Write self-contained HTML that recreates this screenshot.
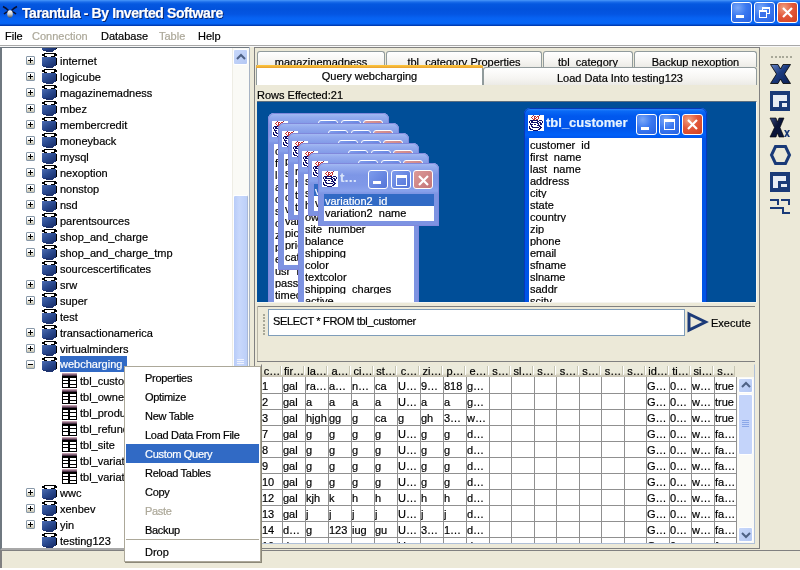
<!DOCTYPE html><html><head><meta charset="utf-8"><style>
*{margin:0;padding:0;box-sizing:border-box}
html,body{width:800px;height:570px;overflow:hidden;background:#ECE9D8;font-family:"Liberation Sans", sans-serif;font-size:11px;color:#000}
.a{position:absolute}
.t{position:absolute;white-space:pre;line-height:16px;-webkit-text-stroke:0.2px currentColor}
#root{position:absolute;left:0;top:0;width:800px;height:570px;overflow:hidden;will-change:transform}
svg{position:absolute;overflow:visible}
</style></head><body><div id="root"><svg width="0" height="0" style="position:absolute"><defs>
<linearGradient id="dbg" x1="0" y1="0" x2="1" y2="1"><stop offset="0" stop-color="#4C6CB0"/><stop offset="0.5" stop-color="#2A4A90"/><stop offset="1" stop-color="#182E6A"/></linearGradient>
<symbol id="db" viewBox="0 0 15 16">
<rect x="2" y="0" width="12" height="1" fill="#000"/>
<rect x="0" y="1" width="3" height="2" fill="#000"/>
<rect x="12" y="1" width="3" height="2" fill="#000"/>
<rect x="3" y="1" width="9" height="2" fill="#fff"/>
<rect x="2" y="3" width="3" height="1" fill="#000"/>
<rect x="9" y="3" width="4" height="1" fill="#000"/>
<rect x="5" y="3" width="4" height="1" fill="#fff"/>
<rect x="0" y="4" width="14" height="9" fill="url(#dbg)"/>
<rect x="14" y="5" width="1" height="7" fill="#000"/>
<rect x="1" y="13" width="2" height="1" fill="#1E3470"/>
<rect x="4" y="13" width="7" height="2" fill="#1E3470"/>
<rect x="2" y="13" width="10" height="1" fill="#1E3470"/>
</symbol>
<linearGradient id="tbh" x1="0" y1="0" x2="0" y2="1"><stop offset="0" stop-color="#E0B8C8"/><stop offset="1" stop-color="#301830"/></linearGradient>
<symbol id="tb" viewBox="0 0 15 15">
<rect x="0" y="0" width="15" height="15" fill="#000"/>
<rect x="0" y="0" width="15" height="3" fill="url(#tbh)"/>
<rect x="1" y="5" width="5" height="2" fill="#fff"/>
<rect x="1" y="8" width="5" height="2" fill="#fff"/>
<rect x="1" y="11" width="5" height="3" fill="#fff"/>
<rect x="8" y="5" width="6" height="2" fill="#fff"/>
<rect x="8" y="8" width="6" height="3" fill="#fff"/>
<rect x="8" y="12" width="6" height="2" fill="#fff"/>
</symbol>
<symbol id="cup" viewBox="0 0 16 16"><rect x="0" y="0" width="16" height="16" fill="#fff"/><path d="M4 1h1v1h-1zM6 1h2v1h-2zM9 1h2v1h-2zM3 2h1v1h-1zM6 2h1v1h-1zM8 2h1v1h-1zM10 2h1v1h-1zM4 3h1v1h-1zM6 3h2v1h-2zM10 3h1v1h-1zM5 4h2v1h-2zM8 4h2v1h-2z" fill="#C83030"/><path d="M5 0h1v1h-1zM11 0h1v1h-1z" fill="#703060"/><path d="M2 5h8v1h-8zM11 5h3v1h-3zM1 6h1v1h-1zM3 6h2v1h-2zM9 6h2v1h-2zM14 6h1v1h-1zM1 7h1v1h-1zM3 7h7v1h-7zM11 7h2v1h-2zM14 7h1v1h-1zM2 8h1v1h-1zM9 8h2v1h-2zM12 8h2v1h-2zM2 9h3v1h-3zM6 9h2v1h-2zM10 9h1v1h-1zM12 9h2v1h-2zM3 10h1v1h-1zM9 10h3v1h-3zM1 11h1v1h-1zM3 11h2v1h-2zM11 11h2v1h-2zM1 12h1v1h-1zM4 12h7v1h-7zM12 12h2v1h-2zM1 13h2v1h-2zM11 13h2v1h-2zM2 14h3v1h-3zM10 14h2v1h-2zM5 15h5v1h-5z" fill="#10106A"/></symbol>
<linearGradient id="xbg" x1="0" y1="0" x2="1" y2="1"><stop offset="0" stop-color="#6A88C8"/><stop offset="0.45" stop-color="#1C3C80"/><stop offset="1" stop-color="#0A1E50"/></linearGradient>
<linearGradient id="xbg2" x1="0" y1="0" x2="1" y2="1"><stop offset="0" stop-color="#3A4C80"/><stop offset="0.45" stop-color="#0A1438"/><stop offset="1" stop-color="#0A1840"/></linearGradient>
</defs></svg><div class="a" style="left:0;top:0;width:800px;height:26px;background:linear-gradient(to bottom,#4A98FA 0px,#3282F2 1px,#1A6CEA 2px,#0558E0 4px,#0252DC 9px,#0455E2 14px,#0762F2 18px,#0766F6 22px,#0562F2 24px,#0040B8 25px,#0038B0 26px)"></div><svg class="a" style="left:0;top:0" width="20" height="20" viewBox="0 0 20 20">
<defs><linearGradient id="spb" x1="0" y1="0" x2="0" y2="1"><stop offset="0" stop-color="#FFFFFF"/><stop offset="0.5" stop-color="#D0D0D0"/><stop offset="1" stop-color="#505050"/></linearGradient></defs>
<path d="M3 6.5 Q6 8 8.5 10.5 M17 6.5 Q14 8 11.5 10.5 M4 14 Q6 12 8.5 11.5 M16 14 Q14 12 11.5 11.5" stroke="#0A1030" stroke-width="1.5" fill="none"/>
<ellipse cx="10" cy="14" rx="2.8" ry="3.8" fill="url(#spb)"/>
</svg><div class="t" style="left:22px;top:5px;font-weight:bold;font-size:14px;color:#fff;text-shadow:1px 1px 0 #0A246A;letter-spacing:-0.4px">Tarantula - By Inverted Software</div><div class="a" style="left:731px;top:2px;width:21px;height:21px;border:1px solid #fff;border-radius:3px;background:radial-gradient(circle at 30% 25%,#7AA8F8 0%,#3A78F0 45%,#2660E0 100%)"><div class="a" style="left:4px;top:12px;width:8px;height:3px;background:#fff"></div></div><div class="a" style="left:754px;top:2px;width:21px;height:21px;border:1px solid #fff;border-radius:3px;background:radial-gradient(circle at 30% 25%,#7AA8F8 0%,#3A78F0 45%,#2660E0 100%)"><div class="a" style="left:7px;top:4px;width:8px;height:7px;border:1px solid #fff;border-top-width:2px"></div><div class="a" style="left:4px;top:7px;width:8px;height:8px;border:1px solid #fff;border-top-width:2px;background:#3A72EA"></div></div><div class="a" style="left:777px;top:2px;width:21px;height:21px;border:1px solid #fff;border-radius:3px;background:radial-gradient(circle at 30% 25%,#F0A080 0%,#E2583A 45%,#D04020 100%)"><svg style="left:0;top:0" width="19" height="19"><path d="M5 5 L14 14 M14 5 L5 14" stroke="#fff" stroke-width="2.2"/></svg></div><div class="a" style="left:0;top:26px;width:800px;height:19px;background:#FFFFFF"></div><div class="a" style="left:0;top:45px;width:800px;height:1px;background:#A8A8A8"></div><div class="a" style="left:0;top:46px;width:800px;height:1px;background:#F8F8F8"></div><div class="t" style="left:5px;top:28px;color:#000">File</div><div class="t" style="left:32px;top:28px;color:#ACA899">Connection</div><div class="t" style="left:101px;top:28px;color:#000">Database</div><div class="t" style="left:159px;top:28px;color:#ACA899">Table</div><div class="t" style="left:198px;top:28px;color:#000">Help</div><div class="a" style="left:0;top:47px;width:250px;height:503px;background:#fff;border-left:2px solid #6F7880;border-top:1px solid #6F7880;border-bottom:2px solid #A8A8A8"></div><div class="a" style="left:2px;top:48px;width:230px;height:500px;overflow:hidden"><svg style="left:40px;top:-11px" width="15" height="16"><use href="#db"/></svg><div class="a" style="left:24px;top:8px;width:9px;height:9px;border:1px solid #8898A8;border-radius:1px;background:linear-gradient(to bottom,#fff 30%,#C8C5B0)"></div><div class="a" style="left:26px;top:12px;width:5px;height:1px;background:#000"></div><div class="a" style="left:28px;top:10px;width:1px;height:5px;background:#000"></div><svg style="left:40px;top:5px" width="15" height="16"><use href="#db"/></svg><div class="t" style="left:58px;top:5px">internet</div><div class="a" style="left:24px;top:24px;width:9px;height:9px;border:1px solid #8898A8;border-radius:1px;background:linear-gradient(to bottom,#fff 30%,#C8C5B0)"></div><div class="a" style="left:26px;top:28px;width:5px;height:1px;background:#000"></div><div class="a" style="left:28px;top:26px;width:1px;height:5px;background:#000"></div><svg style="left:40px;top:21px" width="15" height="16"><use href="#db"/></svg><div class="t" style="left:58px;top:21px">logicube</div><div class="a" style="left:24px;top:40px;width:9px;height:9px;border:1px solid #8898A8;border-radius:1px;background:linear-gradient(to bottom,#fff 30%,#C8C5B0)"></div><div class="a" style="left:26px;top:44px;width:5px;height:1px;background:#000"></div><div class="a" style="left:28px;top:42px;width:1px;height:5px;background:#000"></div><svg style="left:40px;top:37px" width="15" height="16"><use href="#db"/></svg><div class="t" style="left:58px;top:37px">magazinemadness</div><div class="a" style="left:24px;top:56px;width:9px;height:9px;border:1px solid #8898A8;border-radius:1px;background:linear-gradient(to bottom,#fff 30%,#C8C5B0)"></div><div class="a" style="left:26px;top:60px;width:5px;height:1px;background:#000"></div><div class="a" style="left:28px;top:58px;width:1px;height:5px;background:#000"></div><svg style="left:40px;top:53px" width="15" height="16"><use href="#db"/></svg><div class="t" style="left:58px;top:53px">mbez</div><div class="a" style="left:24px;top:72px;width:9px;height:9px;border:1px solid #8898A8;border-radius:1px;background:linear-gradient(to bottom,#fff 30%,#C8C5B0)"></div><div class="a" style="left:26px;top:76px;width:5px;height:1px;background:#000"></div><div class="a" style="left:28px;top:74px;width:1px;height:5px;background:#000"></div><svg style="left:40px;top:69px" width="15" height="16"><use href="#db"/></svg><div class="t" style="left:58px;top:69px">membercredit</div><div class="a" style="left:24px;top:88px;width:9px;height:9px;border:1px solid #8898A8;border-radius:1px;background:linear-gradient(to bottom,#fff 30%,#C8C5B0)"></div><div class="a" style="left:26px;top:92px;width:5px;height:1px;background:#000"></div><div class="a" style="left:28px;top:90px;width:1px;height:5px;background:#000"></div><svg style="left:40px;top:85px" width="15" height="16"><use href="#db"/></svg><div class="t" style="left:58px;top:85px">moneyback</div><div class="a" style="left:24px;top:104px;width:9px;height:9px;border:1px solid #8898A8;border-radius:1px;background:linear-gradient(to bottom,#fff 30%,#C8C5B0)"></div><div class="a" style="left:26px;top:108px;width:5px;height:1px;background:#000"></div><div class="a" style="left:28px;top:106px;width:1px;height:5px;background:#000"></div><svg style="left:40px;top:101px" width="15" height="16"><use href="#db"/></svg><div class="t" style="left:58px;top:101px">mysql</div><div class="a" style="left:24px;top:120px;width:9px;height:9px;border:1px solid #8898A8;border-radius:1px;background:linear-gradient(to bottom,#fff 30%,#C8C5B0)"></div><div class="a" style="left:26px;top:124px;width:5px;height:1px;background:#000"></div><div class="a" style="left:28px;top:122px;width:1px;height:5px;background:#000"></div><svg style="left:40px;top:117px" width="15" height="16"><use href="#db"/></svg><div class="t" style="left:58px;top:117px">nexoption</div><div class="a" style="left:24px;top:136px;width:9px;height:9px;border:1px solid #8898A8;border-radius:1px;background:linear-gradient(to bottom,#fff 30%,#C8C5B0)"></div><div class="a" style="left:26px;top:140px;width:5px;height:1px;background:#000"></div><div class="a" style="left:28px;top:138px;width:1px;height:5px;background:#000"></div><svg style="left:40px;top:133px" width="15" height="16"><use href="#db"/></svg><div class="t" style="left:58px;top:133px">nonstop</div><div class="a" style="left:24px;top:152px;width:9px;height:9px;border:1px solid #8898A8;border-radius:1px;background:linear-gradient(to bottom,#fff 30%,#C8C5B0)"></div><div class="a" style="left:26px;top:156px;width:5px;height:1px;background:#000"></div><div class="a" style="left:28px;top:154px;width:1px;height:5px;background:#000"></div><svg style="left:40px;top:149px" width="15" height="16"><use href="#db"/></svg><div class="t" style="left:58px;top:149px">nsd</div><div class="a" style="left:24px;top:168px;width:9px;height:9px;border:1px solid #8898A8;border-radius:1px;background:linear-gradient(to bottom,#fff 30%,#C8C5B0)"></div><div class="a" style="left:26px;top:172px;width:5px;height:1px;background:#000"></div><div class="a" style="left:28px;top:170px;width:1px;height:5px;background:#000"></div><svg style="left:40px;top:165px" width="15" height="16"><use href="#db"/></svg><div class="t" style="left:58px;top:165px">parentsources</div><div class="a" style="left:24px;top:184px;width:9px;height:9px;border:1px solid #8898A8;border-radius:1px;background:linear-gradient(to bottom,#fff 30%,#C8C5B0)"></div><div class="a" style="left:26px;top:188px;width:5px;height:1px;background:#000"></div><div class="a" style="left:28px;top:186px;width:1px;height:5px;background:#000"></div><svg style="left:40px;top:181px" width="15" height="16"><use href="#db"/></svg><div class="t" style="left:58px;top:181px">shop_and_charge</div><div class="a" style="left:24px;top:200px;width:9px;height:9px;border:1px solid #8898A8;border-radius:1px;background:linear-gradient(to bottom,#fff 30%,#C8C5B0)"></div><div class="a" style="left:26px;top:204px;width:5px;height:1px;background:#000"></div><div class="a" style="left:28px;top:202px;width:1px;height:5px;background:#000"></div><svg style="left:40px;top:197px" width="15" height="16"><use href="#db"/></svg><div class="t" style="left:58px;top:197px">shop_and_charge_tmp</div><svg style="left:40px;top:213px" width="15" height="16"><use href="#db"/></svg><div class="t" style="left:58px;top:213px">sourcescertificates</div><div class="a" style="left:24px;top:232px;width:9px;height:9px;border:1px solid #8898A8;border-radius:1px;background:linear-gradient(to bottom,#fff 30%,#C8C5B0)"></div><div class="a" style="left:26px;top:236px;width:5px;height:1px;background:#000"></div><div class="a" style="left:28px;top:234px;width:1px;height:5px;background:#000"></div><svg style="left:40px;top:229px" width="15" height="16"><use href="#db"/></svg><div class="t" style="left:58px;top:229px">srw</div><div class="a" style="left:24px;top:248px;width:9px;height:9px;border:1px solid #8898A8;border-radius:1px;background:linear-gradient(to bottom,#fff 30%,#C8C5B0)"></div><div class="a" style="left:26px;top:252px;width:5px;height:1px;background:#000"></div><div class="a" style="left:28px;top:250px;width:1px;height:5px;background:#000"></div><svg style="left:40px;top:245px" width="15" height="16"><use href="#db"/></svg><div class="t" style="left:58px;top:245px">super</div><svg style="left:40px;top:261px" width="15" height="16"><use href="#db"/></svg><div class="t" style="left:58px;top:261px">test</div><div class="a" style="left:24px;top:280px;width:9px;height:9px;border:1px solid #8898A8;border-radius:1px;background:linear-gradient(to bottom,#fff 30%,#C8C5B0)"></div><div class="a" style="left:26px;top:284px;width:5px;height:1px;background:#000"></div><div class="a" style="left:28px;top:282px;width:1px;height:5px;background:#000"></div><svg style="left:40px;top:277px" width="15" height="16"><use href="#db"/></svg><div class="t" style="left:58px;top:277px">transactionamerica</div><div class="a" style="left:24px;top:296px;width:9px;height:9px;border:1px solid #8898A8;border-radius:1px;background:linear-gradient(to bottom,#fff 30%,#C8C5B0)"></div><div class="a" style="left:26px;top:300px;width:5px;height:1px;background:#000"></div><div class="a" style="left:28px;top:298px;width:1px;height:5px;background:#000"></div><svg style="left:40px;top:293px" width="15" height="16"><use href="#db"/></svg><div class="t" style="left:58px;top:293px">virtualminders</div><div class="a" style="left:24px;top:312px;width:9px;height:9px;border:1px solid #8898A8;border-radius:1px;background:linear-gradient(to bottom,#fff 30%,#C8C5B0)"></div><div class="a" style="left:26px;top:316px;width:5px;height:1px;background:#000"></div><svg style="left:40px;top:309px" width="15" height="16"><use href="#db"/></svg><div class="a" style="left:58px;top:308px;width:67px;height:16px;background:#316AC5"></div><div class="t" style="left:58px;top:308px;color:#fff">webcharging</div><svg style="left:60px;top:325px" width="15" height="15"><use href="#tb"/></svg><div class="t" style="left:78px;top:325px">tbl_customer</div><svg style="left:60px;top:341px" width="15" height="15"><use href="#tb"/></svg><div class="t" style="left:78px;top:341px">tbl_owner</div><svg style="left:60px;top:357px" width="15" height="15"><use href="#tb"/></svg><div class="t" style="left:78px;top:357px">tbl_product</div><svg style="left:60px;top:373px" width="15" height="15"><use href="#tb"/></svg><div class="t" style="left:78px;top:373px">tbl_refund</div><svg style="left:60px;top:389px" width="15" height="15"><use href="#tb"/></svg><div class="t" style="left:78px;top:389px">tbl_site</div><svg style="left:60px;top:405px" width="15" height="15"><use href="#tb"/></svg><div class="t" style="left:78px;top:405px">tbl_variation</div><svg style="left:60px;top:421px" width="15" height="15"><use href="#tb"/></svg><div class="t" style="left:78px;top:421px">tbl_variation2</div><div class="a" style="left:24px;top:440px;width:9px;height:9px;border:1px solid #8898A8;border-radius:1px;background:linear-gradient(to bottom,#fff 30%,#C8C5B0)"></div><div class="a" style="left:26px;top:444px;width:5px;height:1px;background:#000"></div><div class="a" style="left:28px;top:442px;width:1px;height:5px;background:#000"></div><svg style="left:40px;top:437px" width="15" height="16"><use href="#db"/></svg><div class="t" style="left:58px;top:437px">wwc</div><div class="a" style="left:24px;top:456px;width:9px;height:9px;border:1px solid #8898A8;border-radius:1px;background:linear-gradient(to bottom,#fff 30%,#C8C5B0)"></div><div class="a" style="left:26px;top:460px;width:5px;height:1px;background:#000"></div><div class="a" style="left:28px;top:458px;width:1px;height:5px;background:#000"></div><svg style="left:40px;top:453px" width="15" height="16"><use href="#db"/></svg><div class="t" style="left:58px;top:453px">xenbev</div><div class="a" style="left:24px;top:472px;width:9px;height:9px;border:1px solid #8898A8;border-radius:1px;background:linear-gradient(to bottom,#fff 30%,#C8C5B0)"></div><div class="a" style="left:26px;top:476px;width:5px;height:1px;background:#000"></div><div class="a" style="left:28px;top:474px;width:1px;height:5px;background:#000"></div><svg style="left:40px;top:469px" width="15" height="16"><use href="#db"/></svg><div class="t" style="left:58px;top:469px">yin</div><svg style="left:40px;top:485px" width="15" height="16"><use href="#db"/></svg><div class="t" style="left:58px;top:485px">testing123</div></div><div class="a" style="left:232px;top:48px;width:17px;height:500px;background:#FAFAF6;border-left:1px solid #EEEDE5"></div><div class="a" style="left:233px;top:49px;width:15px;height:16px;border:1px solid #fff;border-radius:2px;background:linear-gradient(135deg,#C8D8FA,#B4C8F4)"></div><svg style="left:236px;top:53px" width="10" height="8"><path d="M1 6 L5 2 L9 6" stroke="#4D6185" stroke-width="2" fill="none"/></svg><div class="a" style="left:233px;top:195px;width:15px;height:332px;border:1px solid #fff;border-right-color:#A8B8D8;border-radius:2px;background:linear-gradient(to right,#B8CCF8,#C8D8FC 40%,#BCCFF8)"></div><div class="a" style="left:237px;top:359px;width:7px;height:1px;background:#EEF2FE"></div><div class="a" style="left:237px;top:361px;width:7px;height:1px;background:#EEF2FE"></div><div class="a" style="left:237px;top:363px;width:7px;height:1px;background:#EEF2FE"></div><div class="a" style="left:249px;top:47px;width:1px;height:503px;background:#A8B4C4"></div><div class="a" style="left:254px;top:47px;width:506px;height:502px;border:1px solid #808080;border-right-color:#808080;background:#ECE9D8"></div><div class="a" style="left:257px;top:51px;width:128px;height:16px;background:linear-gradient(to bottom,#FFFFFF 0%,#F6F5F2 60%,#ECEBE6 100%);border:1px solid #919B9C;border-bottom:none;border-radius:3px 3px 0 0"></div><div class="t" style="left:257px;top:54px;width:128px;text-align:center">magazinemadness</div><div class="a" style="left:386px;top:51px;width:156px;height:16px;background:linear-gradient(to bottom,#FFFFFF 0%,#F6F5F2 60%,#ECEBE6 100%);border:1px solid #919B9C;border-bottom:none;border-radius:3px 3px 0 0"></div><div class="t" style="left:386px;top:54px;width:156px;text-align:center">tbl_category Properties</div><div class="a" style="left:543px;top:51px;width:90px;height:16px;background:linear-gradient(to bottom,#FFFFFF 0%,#F6F5F2 60%,#ECEBE6 100%);border:1px solid #919B9C;border-bottom:none;border-radius:3px 3px 0 0"></div><div class="t" style="left:543px;top:54px;width:90px;text-align:center">tbl_category</div><div class="a" style="left:634px;top:51px;width:123px;height:16px;background:linear-gradient(to bottom,#FFFFFF 0%,#F6F5F2 60%,#ECEBE6 100%);border:1px solid #919B9C;border-bottom:none;border-radius:3px 3px 0 0"></div><div class="t" style="left:634px;top:54px;width:123px;text-align:center">Backup nexoption</div><div class="a" style="left:483px;top:67px;width:274px;height:18px;background:linear-gradient(to bottom,#FFFFFF 0%,#F6F5F2 60%,#ECEBE6 100%);border:1px solid #919B9C;border-bottom:none;border-radius:3px 3px 0 0"></div><div class="t" style="left:483px;top:70px;width:274px;text-align:center">Load Data Into testing123</div><div class="a" style="left:256px;top:65px;width:227px;height:20px;background:#FFFFFF;border:1px solid #919B9C;border-top:none;border-bottom:none"></div><div class="a" style="left:256px;top:65px;width:227px;height:3px;background:linear-gradient(to bottom,#FFC83C,#E8A030);border-radius:2px 2px 0 0"></div><div class="t" style="left:256px;top:68px;width:227px;text-align:center">Query webcharging</div><div class="t" style="left:257px;top:87px">Rows Effected:21</div><div class="a" style="left:257px;top:101px;width:500px;height:202px;background:#004E98;border-top:1px solid #5A6E80;border-right:1px solid #F4F4F0;border-bottom:1px solid #F4F4F0;overflow:hidden"><div class="a" style="left:11px;top:11px;width:121px;height:250px;background:#7D93E2;border-radius:6px 6px 0 0;overflow:hidden;box-shadow:inset 0 0 0 1px #8088DC"><div class="a" style="left:0;top:0;width:121px;height:31px;background:linear-gradient(to bottom,#A8BDF4 0px,#94ABEE 4px,#7D96E6 12px,#7F98E8 22px,#8AA2EC 28px,#7E96E4 30px)"></div><svg style="left:4px;top:8px" width="16" height="16"><use href="#cup"/></svg><div class="a" style="left:50px;top:7px;width:20px;height:19px;border:1px solid #fff;border-radius:3px;background:linear-gradient(135deg,#7E9CEC,#5474D8)"><div class="a" style="left:4px;top:10px;width:8px;height:3px;background:#fff"></div></div><div class="a" style="left:73px;top:7px;width:20px;height:19px;border:1px solid #fff;border-radius:3px;background:linear-gradient(135deg,#7E9CEC,#5474D8)"><div class="a" style="left:4px;top:4px;width:11px;height:11px;border:1px solid #fff;border-top-width:3px"></div></div><div class="a" style="left:95px;top:7px;width:20px;height:19px;border:1px solid #fff;border-radius:3px;background:linear-gradient(135deg,#DC9A98,#C47478)"><svg style="left:0;top:0" width="18" height="17"><path d="M5 5 L14 14 M14 5 L5 14" stroke="#fff" stroke-width="2.2"/></svg></div><div class="a" style="left:6px;top:31px;width:110px;height:214px;background:#fff;overflow:hidden"><div class="a" style="left:0;top:0px;width:110px;height:12px;overflow:hidden"><div class="t" style="left:1px;top:-1px">customer_id</div></div><div class="a" style="left:0;top:12px;width:110px;height:12px;overflow:hidden"><div class="t" style="left:1px;top:-1px">first_name</div></div><div class="a" style="left:0;top:24px;width:110px;height:12px;overflow:hidden"><div class="t" style="left:1px;top:-1px">last_name</div></div><div class="a" style="left:0;top:36px;width:110px;height:12px;overflow:hidden"><div class="t" style="left:1px;top:-1px">address</div></div><div class="a" style="left:0;top:48px;width:110px;height:12px;overflow:hidden"><div class="t" style="left:1px;top:-1px">city</div></div><div class="a" style="left:0;top:60px;width:110px;height:12px;overflow:hidden"><div class="t" style="left:1px;top:-1px">state</div></div><div class="a" style="left:0;top:72px;width:110px;height:12px;overflow:hidden"><div class="t" style="left:1px;top:-1px">country</div></div><div class="a" style="left:0;top:84px;width:110px;height:12px;overflow:hidden"><div class="t" style="left:1px;top:-1px">zip</div></div><div class="a" style="left:0;top:96px;width:110px;height:12px;overflow:hidden"><div class="t" style="left:1px;top:-1px">phone</div></div><div class="a" style="left:0;top:108px;width:110px;height:12px;overflow:hidden"><div class="t" style="left:1px;top:-1px">email</div></div><div class="a" style="left:0;top:120px;width:110px;height:12px;overflow:hidden"><div class="t" style="left:1px;top:-1px">usr_name</div></div><div class="a" style="left:0;top:132px;width:110px;height:12px;overflow:hidden"><div class="t" style="left:1px;top:-1px">password</div></div><div class="a" style="left:0;top:144px;width:110px;height:12px;overflow:hidden"><div class="t" style="left:1px;top:-1px">timecreated</div></div></div><div class="a" style="left:0;top:0;width:121px;height:256px;border:1px solid #8088DC;border-radius:6px 6px 0 0"></div></div><div class="a" style="left:21px;top:21px;width:121px;height:147px;background:#7D93E2;border-radius:6px 6px 0 0;overflow:hidden;box-shadow:inset 0 0 0 1px #8088DC"><div class="a" style="left:0;top:0;width:121px;height:31px;background:linear-gradient(to bottom,#A8BDF4 0px,#94ABEE 4px,#7D96E6 12px,#7F98E8 22px,#8AA2EC 28px,#7E96E4 30px)"></div><svg style="left:4px;top:8px" width="16" height="16"><use href="#cup"/></svg><div class="a" style="left:50px;top:7px;width:20px;height:19px;border:1px solid #fff;border-radius:3px;background:linear-gradient(135deg,#7E9CEC,#5474D8)"><div class="a" style="left:4px;top:10px;width:8px;height:3px;background:#fff"></div></div><div class="a" style="left:73px;top:7px;width:20px;height:19px;border:1px solid #fff;border-radius:3px;background:linear-gradient(135deg,#7E9CEC,#5474D8)"><div class="a" style="left:4px;top:4px;width:11px;height:11px;border:1px solid #fff;border-top-width:3px"></div></div><div class="a" style="left:95px;top:7px;width:20px;height:19px;border:1px solid #fff;border-radius:3px;background:linear-gradient(135deg,#DC9A98,#C47478)"><svg style="left:0;top:0" width="18" height="17"><path d="M5 5 L14 14 M14 5 L5 14" stroke="#fff" stroke-width="2.2"/></svg></div><div class="a" style="left:6px;top:31px;width:110px;height:111px;background:#fff;overflow:hidden"><div class="a" style="left:0;top:0px;width:110px;height:12px;overflow:hidden"><div class="t" style="left:1px;top:-1px">product_id</div></div><div class="a" style="left:0;top:12px;width:110px;height:12px;overflow:hidden"><div class="t" style="left:1px;top:-1px">site_id</div></div><div class="a" style="left:0;top:24px;width:110px;height:12px;overflow:hidden"><div class="t" style="left:1px;top:-1px">ref_id</div></div><div class="a" style="left:0;top:36px;width:110px;height:12px;overflow:hidden"><div class="t" style="left:1px;top:-1px">category</div></div><div class="a" style="left:0;top:48px;width:110px;height:12px;overflow:hidden"><div class="t" style="left:1px;top:-1px">variation</div></div><div class="a" style="left:0;top:60px;width:110px;height:12px;overflow:hidden"><div class="t" style="left:1px;top:-1px">variation2</div></div><div class="a" style="left:0;top:72px;width:110px;height:12px;overflow:hidden"><div class="t" style="left:1px;top:-1px">picture</div></div><div class="a" style="left:0;top:84px;width:110px;height:12px;overflow:hidden"><div class="t" style="left:1px;top:-1px">price</div></div><div class="a" style="left:0;top:96px;width:110px;height:12px;overflow:hidden"><div class="t" style="left:1px;top:-1px">category</div></div></div><div class="a" style="left:0;top:0;width:121px;height:153px;border:1px solid #8088DC;border-radius:6px 6px 0 0"></div></div><div class="a" style="left:31px;top:31px;width:121px;height:87px;background:#7D93E2;border-radius:6px 6px 0 0;overflow:hidden;box-shadow:inset 0 0 0 1px #8088DC"><div class="a" style="left:0;top:0;width:121px;height:31px;background:linear-gradient(to bottom,#A8BDF4 0px,#94ABEE 4px,#7D96E6 12px,#7F98E8 22px,#8AA2EC 28px,#7E96E4 30px)"></div><svg style="left:4px;top:8px" width="16" height="16"><use href="#cup"/></svg><div class="a" style="left:50px;top:7px;width:20px;height:19px;border:1px solid #fff;border-radius:3px;background:linear-gradient(135deg,#7E9CEC,#5474D8)"><div class="a" style="left:4px;top:10px;width:8px;height:3px;background:#fff"></div></div><div class="a" style="left:73px;top:7px;width:20px;height:19px;border:1px solid #fff;border-radius:3px;background:linear-gradient(135deg,#7E9CEC,#5474D8)"><div class="a" style="left:4px;top:4px;width:11px;height:11px;border:1px solid #fff;border-top-width:3px"></div></div><div class="a" style="left:95px;top:7px;width:20px;height:19px;border:1px solid #fff;border-radius:3px;background:linear-gradient(135deg,#DC9A98,#C47478)"><svg style="left:0;top:0" width="18" height="17"><path d="M5 5 L14 14 M14 5 L5 14" stroke="#fff" stroke-width="2.2"/></svg></div><div class="a" style="left:6px;top:31px;width:110px;height:51px;background:#fff;overflow:hidden"><div class="a" style="left:0;top:0px;width:110px;height:12px;overflow:hidden"><div class="t" style="left:1px;top:-1px">refund_id</div></div><div class="a" style="left:0;top:12px;width:110px;height:12px;overflow:hidden"><div class="t" style="left:1px;top:-1px">hash</div></div><div class="a" style="left:0;top:24px;width:110px;height:12px;overflow:hidden"><div class="t" style="left:1px;top:-1px">trans_id</div></div><div class="a" style="left:0;top:36px;width:110px;height:12px;overflow:hidden"><div class="t" style="left:1px;top:-1px">total</div></div></div><div class="a" style="left:0;top:0;width:121px;height:93px;border:1px solid #8088DC;border-radius:6px 6px 0 0"></div></div><div class="a" style="left:41px;top:41px;width:121px;height:250px;background:#7D93E2;border-radius:6px 6px 0 0;overflow:hidden;box-shadow:inset 0 0 0 1px #8088DC"><div class="a" style="left:0;top:0;width:121px;height:31px;background:linear-gradient(to bottom,#A8BDF4 0px,#94ABEE 4px,#7D96E6 12px,#7F98E8 22px,#8AA2EC 28px,#7E96E4 30px)"></div><svg style="left:4px;top:8px" width="16" height="16"><use href="#cup"/></svg><div class="a" style="left:50px;top:7px;width:20px;height:19px;border:1px solid #fff;border-radius:3px;background:linear-gradient(135deg,#7E9CEC,#5474D8)"><div class="a" style="left:4px;top:10px;width:8px;height:3px;background:#fff"></div></div><div class="a" style="left:73px;top:7px;width:20px;height:19px;border:1px solid #fff;border-radius:3px;background:linear-gradient(135deg,#7E9CEC,#5474D8)"><div class="a" style="left:4px;top:4px;width:11px;height:11px;border:1px solid #fff;border-top-width:3px"></div></div><div class="a" style="left:95px;top:7px;width:20px;height:19px;border:1px solid #fff;border-radius:3px;background:linear-gradient(135deg,#DC9A98,#C47478)"><svg style="left:0;top:0" width="18" height="17"><path d="M5 5 L14 14 M14 5 L5 14" stroke="#fff" stroke-width="2.2"/></svg></div><div class="a" style="left:6px;top:31px;width:110px;height:214px;background:#fff;overflow:hidden"><div class="a" style="left:0;top:0px;width:110px;height:12px;overflow:hidden"><div class="t" style="left:1px;top:-1px">site_id</div></div><div class="a" style="left:0;top:12px;width:110px;height:12px;overflow:hidden"><div class="t" style="left:1px;top:-1px">sender</div></div><div class="a" style="left:0;top:24px;width:110px;height:12px;overflow:hidden"><div class="t" style="left:1px;top:-1px">hash</div></div><div class="a" style="left:0;top:36px;width:110px;height:12px;overflow:hidden"><div class="t" style="left:1px;top:-1px">owner_id</div></div><div class="a" style="left:0;top:48px;width:110px;height:12px;overflow:hidden"><div class="t" style="left:1px;top:-1px">site_number</div></div><div class="a" style="left:0;top:60px;width:110px;height:12px;overflow:hidden"><div class="t" style="left:1px;top:-1px">balance</div></div><div class="a" style="left:0;top:72px;width:110px;height:12px;overflow:hidden"><div class="t" style="left:1px;top:-1px">shipping</div></div><div class="a" style="left:0;top:84px;width:110px;height:12px;overflow:hidden"><div class="t" style="left:1px;top:-1px">color</div></div><div class="a" style="left:0;top:96px;width:110px;height:12px;overflow:hidden"><div class="t" style="left:1px;top:-1px">textcolor</div></div><div class="a" style="left:0;top:108px;width:110px;height:12px;overflow:hidden"><div class="t" style="left:1px;top:-1px">shipping_charges</div></div><div class="a" style="left:0;top:120px;width:110px;height:12px;overflow:hidden"><div class="t" style="left:1px;top:-1px">active</div></div><div class="a" style="left:0;top:132px;width:110px;height:12px;overflow:hidden"><div class="t" style="left:1px;top:-1px">x</div></div></div><div class="a" style="left:0;top:0;width:121px;height:256px;border:1px solid #8088DC;border-radius:6px 6px 0 0"></div></div><div class="a" style="left:51px;top:51px;width:121px;height:63px;background:#7D93E2;border-radius:6px 6px 0 0;overflow:hidden;box-shadow:inset 0 0 0 1px #8088DC"><div class="a" style="left:0;top:0;width:121px;height:31px;background:linear-gradient(to bottom,#A8BDF4 0px,#94ABEE 4px,#7D96E6 12px,#7F98E8 22px,#8AA2EC 28px,#7E96E4 30px)"></div><svg style="left:4px;top:8px" width="16" height="16"><use href="#cup"/></svg><div class="a" style="left:50px;top:7px;width:20px;height:19px;border:1px solid #fff;border-radius:3px;background:linear-gradient(135deg,#7E9CEC,#5474D8)"><div class="a" style="left:4px;top:10px;width:8px;height:3px;background:#fff"></div></div><div class="a" style="left:73px;top:7px;width:20px;height:19px;border:1px solid #fff;border-radius:3px;background:linear-gradient(135deg,#7E9CEC,#5474D8)"><div class="a" style="left:4px;top:4px;width:11px;height:11px;border:1px solid #fff;border-top-width:3px"></div></div><div class="a" style="left:95px;top:7px;width:20px;height:19px;border:1px solid #fff;border-radius:3px;background:linear-gradient(135deg,#DC9A98,#C47478)"><svg style="left:0;top:0" width="18" height="17"><path d="M5 5 L14 14 M14 5 L5 14" stroke="#fff" stroke-width="2.2"/></svg></div><div class="a" style="left:6px;top:31px;width:110px;height:27px;background:#fff;overflow:hidden"><div class="a" style="left:0;top:0px;width:110px;height:12px;background:#316AC5;overflow:hidden"><div class="t" style="left:1px;top:-1px;color:#fff">variation_id</div></div><div class="a" style="left:0;top:12px;width:110px;height:12px;overflow:hidden"><div class="t" style="left:1px;top:-1px">variation_name</div></div></div><div class="a" style="left:0;top:0;width:121px;height:69px;border:1px solid #8088DC;border-radius:6px 6px 0 0"></div></div><div class="a" style="left:61px;top:61px;width:121px;height:63px;background:#7D93E2;border-radius:6px 6px 0 0;overflow:hidden;box-shadow:inset 0 0 0 1px #8088DC"><div class="a" style="left:0;top:0;width:121px;height:31px;background:linear-gradient(to bottom,#A8BDF4 0px,#94ABEE 4px,#7D96E6 12px,#7F98E8 22px,#8AA2EC 28px,#7E96E4 30px)"></div><svg style="left:4px;top:8px" width="16" height="16"><use href="#cup"/></svg><div class="t" style="left:22px;top:7px;font-weight:bold;font-size:13px;color:#D8E4FA">t…</div><div class="a" style="left:50px;top:7px;width:20px;height:19px;border:1px solid #fff;border-radius:3px;background:linear-gradient(135deg,#7E9CEC,#5474D8)"><div class="a" style="left:4px;top:10px;width:8px;height:3px;background:#fff"></div></div><div class="a" style="left:73px;top:7px;width:20px;height:19px;border:1px solid #fff;border-radius:3px;background:linear-gradient(135deg,#7E9CEC,#5474D8)"><div class="a" style="left:4px;top:4px;width:11px;height:11px;border:1px solid #fff;border-top-width:3px"></div></div><div class="a" style="left:95px;top:7px;width:20px;height:19px;border:1px solid #fff;border-radius:3px;background:linear-gradient(135deg,#DC9A98,#C47478)"><svg style="left:0;top:0" width="18" height="17"><path d="M5 5 L14 14 M14 5 L5 14" stroke="#fff" stroke-width="2.2"/></svg></div><div class="a" style="left:6px;top:31px;width:110px;height:27px;background:#fff;overflow:hidden"><div class="a" style="left:0;top:0px;width:110px;height:12px;background:#316AC5;overflow:hidden"><div class="t" style="left:1px;top:-1px;color:#fff">variation2_id</div></div><div class="a" style="left:0;top:12px;width:110px;height:12px;overflow:hidden"><div class="t" style="left:1px;top:-1px">variation2_name</div></div></div><div class="a" style="left:0;top:0;width:121px;height:69px;border:1px solid #8088DC;border-radius:6px 6px 0 0"></div></div><div class="a" style="left:267px;top:6px;width:183px;height:250px;background:#0054E6;border-radius:6px 6px 0 0;overflow:hidden;box-shadow:inset 0 0 0 1px #0838B8"><div class="a" style="left:0;top:0;width:183px;height:30px;background:linear-gradient(to bottom,#3D95FF 0px,#0A6AF6 3px,#0058EE 8px,#0055EA 20px,#0060F8 27px,#0058F0 29px)"></div><svg style="left:4px;top:7px" width="16" height="16"><use href="#cup"/></svg><div class="t" style="left:22px;top:7px;font-weight:bold;font-size:13px;color:#E8F4FF">tbl_customer</div><div class="a" style="left:112px;top:6px;width:21px;height:21px;border:1px solid #fff;border-radius:3px;background:radial-gradient(circle at 30% 25%,#7AA8F8 0%,#3A78F0 45%,#2660E0 100%)"><div class="a" style="left:4px;top:12px;width:8px;height:3px;background:#fff"></div></div><div class="a" style="left:135px;top:6px;width:21px;height:21px;border:1px solid #fff;border-radius:3px;background:radial-gradient(circle at 30% 25%,#7AA8F8 0%,#3A78F0 45%,#2660E0 100%)"><div class="a" style="left:4px;top:4px;width:11px;height:11px;border:1px solid #fff;border-top-width:3px"></div></div><div class="a" style="left:158px;top:6px;width:21px;height:21px;border:1px solid #fff;border-radius:3px;background:radial-gradient(circle at 30% 25%,#F0A080 0%,#E2583A 45%,#D04020 100%)"><svg style="left:0;top:0" width="19" height="19"><path d="M5 5 L14 14 M14 5 L5 14" stroke="#fff" stroke-width="2.2"/></svg></div><div class="a" style="left:5px;top:30px;width:173px;height:215px;background:#fff;overflow:hidden"><div class="a" style="left:0;top:0px;width:173px;height:12px;overflow:hidden"><div class="t" style="left:1px;top:-1px">customer_id</div></div><div class="a" style="left:0;top:12px;width:173px;height:12px;overflow:hidden"><div class="t" style="left:1px;top:-1px">first_name</div></div><div class="a" style="left:0;top:24px;width:173px;height:12px;overflow:hidden"><div class="t" style="left:1px;top:-1px">last_name</div></div><div class="a" style="left:0;top:36px;width:173px;height:12px;overflow:hidden"><div class="t" style="left:1px;top:-1px">address</div></div><div class="a" style="left:0;top:48px;width:173px;height:12px;overflow:hidden"><div class="t" style="left:1px;top:-1px">city</div></div><div class="a" style="left:0;top:60px;width:173px;height:12px;overflow:hidden"><div class="t" style="left:1px;top:-1px">state</div></div><div class="a" style="left:0;top:72px;width:173px;height:12px;overflow:hidden"><div class="t" style="left:1px;top:-1px">country</div></div><div class="a" style="left:0;top:84px;width:173px;height:12px;overflow:hidden"><div class="t" style="left:1px;top:-1px">zip</div></div><div class="a" style="left:0;top:96px;width:173px;height:12px;overflow:hidden"><div class="t" style="left:1px;top:-1px">phone</div></div><div class="a" style="left:0;top:108px;width:173px;height:12px;overflow:hidden"><div class="t" style="left:1px;top:-1px">email</div></div><div class="a" style="left:0;top:120px;width:173px;height:12px;overflow:hidden"><div class="t" style="left:1px;top:-1px">sfname</div></div><div class="a" style="left:0;top:132px;width:173px;height:12px;overflow:hidden"><div class="t" style="left:1px;top:-1px">slname</div></div><div class="a" style="left:0;top:144px;width:173px;height:12px;overflow:hidden"><div class="t" style="left:1px;top:-1px">saddr</div></div><div class="a" style="left:0;top:156px;width:173px;height:12px;overflow:hidden"><div class="t" style="left:1px;top:-1px">scity</div></div></div><div class="a" style="left:0;top:0;width:183px;height:256px;border:1px solid #0838B8;border-radius:6px 6px 0 0"></div></div></div><div class="a" style="left:257px;top:306px;width:498px;height:1px;background:#808080"></div><div class="a" style="left:257px;top:306px;width:1px;height:56px;background:#B8B5A6"></div><div class="a" style="left:257px;top:361px;width:498px;height:1px;background:#808080"></div><div class="a" style="left:263px;top:314px;width:2px;height:2px;background:#A8A898"></div><div class="a" style="left:263px;top:317px;width:2px;height:2px;background:#A8A898"></div><div class="a" style="left:263px;top:320px;width:2px;height:2px;background:#A8A898"></div><div class="a" style="left:263px;top:324px;width:2px;height:2px;background:#A8A898"></div><div class="a" style="left:263px;top:327px;width:2px;height:2px;background:#A8A898"></div><div class="a" style="left:263px;top:330px;width:2px;height:2px;background:#A8A898"></div><div class="a" style="left:263px;top:333px;width:2px;height:2px;background:#A8A898"></div><div class="a" style="left:268px;top:309px;width:417px;height:27px;background:#fff;border:1px solid #7F9DB9"></div><div class="t" style="left:273px;top:313px;letter-spacing:-0.33px">SELECT * FROM tbl_customer</div><svg style="left:687px;top:312px" width="21" height="20" viewBox="0 0 21 20"><path d="M2 2 L18.5 10 L2 18 Z" fill="none" stroke="#1C3A78" stroke-width="3" stroke-linejoin="miter"/></svg><div class="t" style="left:711px;top:315px">Execute</div><div class="a" style="left:261px;top:364px;width:494px;height:180px;background:#fff;border:1px solid #7F7F7F;border-top-color:#ECE9D8;border-right-color:#B0C0D8;border-bottom-color:#B0C0D8"></div><div class="a" style="left:262px;top:365px;width:476px;height:178px;overflow:hidden"><div class="a" style="left:0;top:0;width:473px;height:12px;background:linear-gradient(to bottom,#EBEADB 0,#EBEADB 8px,#E0DDCC 9px,#D6D2C2 10px,#CBC7B8 11px)"></div><div class="t" style="left:0px;top:-2px;width:20px;overflow:hidden;text-align:center">c…</div><div class="a" style="left:18px;top:1px;width:1px;height:9px;background:#C7C5B2"></div><div class="a" style="left:19px;top:1px;width:1px;height:9px;background:#fff"></div><div class="t" style="left:21px;top:-2px;width:22px;overflow:hidden;text-align:center">fir…</div><div class="a" style="left:41px;top:1px;width:1px;height:9px;background:#C7C5B2"></div><div class="a" style="left:42px;top:1px;width:1px;height:9px;background:#fff"></div><div class="t" style="left:44px;top:-2px;width:22px;overflow:hidden;text-align:center">la…</div><div class="a" style="left:64px;top:1px;width:1px;height:9px;background:#C7C5B2"></div><div class="a" style="left:65px;top:1px;width:1px;height:9px;background:#fff"></div><div class="t" style="left:67px;top:-2px;width:22px;overflow:hidden;text-align:center">a…</div><div class="a" style="left:87px;top:1px;width:1px;height:9px;background:#C7C5B2"></div><div class="a" style="left:88px;top:1px;width:1px;height:9px;background:#fff"></div><div class="t" style="left:90px;top:-2px;width:22px;overflow:hidden;text-align:center">ci…</div><div class="a" style="left:110px;top:1px;width:1px;height:9px;background:#C7C5B2"></div><div class="a" style="left:111px;top:1px;width:1px;height:9px;background:#fff"></div><div class="t" style="left:113px;top:-2px;width:22px;overflow:hidden;text-align:center">st…</div><div class="a" style="left:133px;top:1px;width:1px;height:9px;background:#C7C5B2"></div><div class="a" style="left:134px;top:1px;width:1px;height:9px;background:#fff"></div><div class="t" style="left:136px;top:-2px;width:22px;overflow:hidden;text-align:center">c…</div><div class="a" style="left:156px;top:1px;width:1px;height:9px;background:#C7C5B2"></div><div class="a" style="left:157px;top:1px;width:1px;height:9px;background:#fff"></div><div class="t" style="left:159px;top:-2px;width:22px;overflow:hidden;text-align:center">zi…</div><div class="a" style="left:179px;top:1px;width:1px;height:9px;background:#C7C5B2"></div><div class="a" style="left:180px;top:1px;width:1px;height:9px;background:#fff"></div><div class="t" style="left:182px;top:-2px;width:22px;overflow:hidden;text-align:center">p…</div><div class="a" style="left:202px;top:1px;width:1px;height:9px;background:#C7C5B2"></div><div class="a" style="left:203px;top:1px;width:1px;height:9px;background:#fff"></div><div class="t" style="left:205px;top:-2px;width:22px;overflow:hidden;text-align:center">e…</div><div class="a" style="left:225px;top:1px;width:1px;height:9px;background:#C7C5B2"></div><div class="a" style="left:226px;top:1px;width:1px;height:9px;background:#fff"></div><div class="t" style="left:228px;top:-2px;width:21px;overflow:hidden;text-align:center">s…</div><div class="a" style="left:247px;top:1px;width:1px;height:9px;background:#C7C5B2"></div><div class="a" style="left:248px;top:1px;width:1px;height:9px;background:#fff"></div><div class="t" style="left:250px;top:-2px;width:22px;overflow:hidden;text-align:center">sl…</div><div class="a" style="left:270px;top:1px;width:1px;height:9px;background:#C7C5B2"></div><div class="a" style="left:271px;top:1px;width:1px;height:9px;background:#fff"></div><div class="t" style="left:273px;top:-2px;width:21px;overflow:hidden;text-align:center">s…</div><div class="a" style="left:292px;top:1px;width:1px;height:9px;background:#C7C5B2"></div><div class="a" style="left:293px;top:1px;width:1px;height:9px;background:#fff"></div><div class="t" style="left:295px;top:-2px;width:22px;overflow:hidden;text-align:center">s…</div><div class="a" style="left:315px;top:1px;width:1px;height:9px;background:#C7C5B2"></div><div class="a" style="left:316px;top:1px;width:1px;height:9px;background:#fff"></div><div class="t" style="left:318px;top:-2px;width:21px;overflow:hidden;text-align:center">s…</div><div class="a" style="left:337px;top:1px;width:1px;height:9px;background:#C7C5B2"></div><div class="a" style="left:338px;top:1px;width:1px;height:9px;background:#fff"></div><div class="t" style="left:340px;top:-2px;width:22px;overflow:hidden;text-align:center">s…</div><div class="a" style="left:360px;top:1px;width:1px;height:9px;background:#C7C5B2"></div><div class="a" style="left:361px;top:1px;width:1px;height:9px;background:#fff"></div><div class="t" style="left:363px;top:-2px;width:21px;overflow:hidden;text-align:center">s…</div><div class="a" style="left:382px;top:1px;width:1px;height:9px;background:#C7C5B2"></div><div class="a" style="left:383px;top:1px;width:1px;height:9px;background:#fff"></div><div class="t" style="left:385px;top:-2px;width:22px;overflow:hidden;text-align:center">id…</div><div class="a" style="left:405px;top:1px;width:1px;height:9px;background:#C7C5B2"></div><div class="a" style="left:406px;top:1px;width:1px;height:9px;background:#fff"></div><div class="t" style="left:408px;top:-2px;width:21px;overflow:hidden;text-align:center">ti…</div><div class="a" style="left:427px;top:1px;width:1px;height:9px;background:#C7C5B2"></div><div class="a" style="left:428px;top:1px;width:1px;height:9px;background:#fff"></div><div class="t" style="left:430px;top:-2px;width:22px;overflow:hidden;text-align:center">si…</div><div class="a" style="left:450px;top:1px;width:1px;height:9px;background:#C7C5B2"></div><div class="a" style="left:451px;top:1px;width:1px;height:9px;background:#fff"></div><div class="t" style="left:453px;top:-2px;width:21px;overflow:hidden;text-align:center">s…</div><div class="a" style="left:472px;top:1px;width:1px;height:9px;background:#C7C5B2"></div><div class="a" style="left:473px;top:1px;width:1px;height:9px;background:#fff"></div><div class="t" style="left:0px;top:13px">1</div><div class="t" style="left:21px;top:13px">gal</div><div class="t" style="left:44px;top:13px">ra…</div><div class="t" style="left:67px;top:13px">a…</div><div class="t" style="left:90px;top:13px">n…</div><div class="t" style="left:113px;top:13px">ca</div><div class="t" style="left:136px;top:13px">U…</div><div class="t" style="left:159px;top:13px">9…</div><div class="t" style="left:182px;top:13px">818</div><div class="t" style="left:205px;top:13px">g…</div><div class="t" style="left:385px;top:13px">G…</div><div class="t" style="left:408px;top:13px">0…</div><div class="t" style="left:430px;top:13px">w…</div><div class="t" style="left:453px;top:13px">true</div><div class="a" style="left:0;top:28px;width:474px;height:1px;background:#909090"></div><div class="t" style="left:0px;top:29px">2</div><div class="t" style="left:21px;top:29px">gal</div><div class="t" style="left:44px;top:29px">a</div><div class="t" style="left:67px;top:29px">a</div><div class="t" style="left:90px;top:29px">a</div><div class="t" style="left:113px;top:29px">a</div><div class="t" style="left:136px;top:29px">U…</div><div class="t" style="left:159px;top:29px">a</div><div class="t" style="left:182px;top:29px">a</div><div class="t" style="left:205px;top:29px">g…</div><div class="t" style="left:385px;top:29px">G…</div><div class="t" style="left:408px;top:29px">0…</div><div class="t" style="left:430px;top:29px">w…</div><div class="t" style="left:453px;top:29px">true</div><div class="a" style="left:0;top:44px;width:474px;height:1px;background:#909090"></div><div class="t" style="left:0px;top:45px">3</div><div class="t" style="left:21px;top:45px">gal</div><div class="t" style="left:44px;top:45px">hjgh</div><div class="t" style="left:67px;top:45px">gg</div><div class="t" style="left:90px;top:45px">g</div><div class="t" style="left:113px;top:45px">ca</div><div class="t" style="left:136px;top:45px">g</div><div class="t" style="left:159px;top:45px">gh</div><div class="t" style="left:182px;top:45px">3…</div><div class="t" style="left:205px;top:45px">w…</div><div class="t" style="left:385px;top:45px">G…</div><div class="t" style="left:408px;top:45px">0…</div><div class="t" style="left:430px;top:45px">w…</div><div class="t" style="left:453px;top:45px">true</div><div class="a" style="left:0;top:60px;width:474px;height:1px;background:#909090"></div><div class="t" style="left:0px;top:61px">7</div><div class="t" style="left:21px;top:61px">gal</div><div class="t" style="left:44px;top:61px">g</div><div class="t" style="left:67px;top:61px">g</div><div class="t" style="left:90px;top:61px">g</div><div class="t" style="left:113px;top:61px">g</div><div class="t" style="left:136px;top:61px">U…</div><div class="t" style="left:159px;top:61px">g</div><div class="t" style="left:182px;top:61px">g</div><div class="t" style="left:205px;top:61px">d…</div><div class="t" style="left:385px;top:61px">G…</div><div class="t" style="left:408px;top:61px">0…</div><div class="t" style="left:430px;top:61px">w…</div><div class="t" style="left:453px;top:61px">fa…</div><div class="a" style="left:0;top:76px;width:474px;height:1px;background:#909090"></div><div class="t" style="left:0px;top:77px">8</div><div class="t" style="left:21px;top:77px">gal</div><div class="t" style="left:44px;top:77px">g</div><div class="t" style="left:67px;top:77px">g</div><div class="t" style="left:90px;top:77px">g</div><div class="t" style="left:113px;top:77px">g</div><div class="t" style="left:136px;top:77px">U…</div><div class="t" style="left:159px;top:77px">g</div><div class="t" style="left:182px;top:77px">g</div><div class="t" style="left:205px;top:77px">d…</div><div class="t" style="left:385px;top:77px">G…</div><div class="t" style="left:408px;top:77px">0…</div><div class="t" style="left:430px;top:77px">w…</div><div class="t" style="left:453px;top:77px">fa…</div><div class="a" style="left:0;top:92px;width:474px;height:1px;background:#909090"></div><div class="t" style="left:0px;top:93px">9</div><div class="t" style="left:21px;top:93px">gal</div><div class="t" style="left:44px;top:93px">g</div><div class="t" style="left:67px;top:93px">g</div><div class="t" style="left:90px;top:93px">g</div><div class="t" style="left:113px;top:93px">g</div><div class="t" style="left:136px;top:93px">U…</div><div class="t" style="left:159px;top:93px">g</div><div class="t" style="left:182px;top:93px">g</div><div class="t" style="left:205px;top:93px">d…</div><div class="t" style="left:385px;top:93px">G…</div><div class="t" style="left:408px;top:93px">0…</div><div class="t" style="left:430px;top:93px">w…</div><div class="t" style="left:453px;top:93px">fa…</div><div class="a" style="left:0;top:108px;width:474px;height:1px;background:#909090"></div><div class="t" style="left:0px;top:109px">10</div><div class="t" style="left:21px;top:109px">gal</div><div class="t" style="left:44px;top:109px">g</div><div class="t" style="left:67px;top:109px">g</div><div class="t" style="left:90px;top:109px">g</div><div class="t" style="left:113px;top:109px">g</div><div class="t" style="left:136px;top:109px">U…</div><div class="t" style="left:159px;top:109px">g</div><div class="t" style="left:182px;top:109px">g</div><div class="t" style="left:205px;top:109px">d…</div><div class="t" style="left:385px;top:109px">G…</div><div class="t" style="left:408px;top:109px">0…</div><div class="t" style="left:430px;top:109px">w…</div><div class="t" style="left:453px;top:109px">fa…</div><div class="a" style="left:0;top:124px;width:474px;height:1px;background:#909090"></div><div class="t" style="left:0px;top:125px">12</div><div class="t" style="left:21px;top:125px">gal</div><div class="t" style="left:44px;top:125px">kjh</div><div class="t" style="left:67px;top:125px">k</div><div class="t" style="left:90px;top:125px">h</div><div class="t" style="left:113px;top:125px">h</div><div class="t" style="left:136px;top:125px">U…</div><div class="t" style="left:159px;top:125px">h</div><div class="t" style="left:182px;top:125px">h</div><div class="t" style="left:205px;top:125px">d…</div><div class="t" style="left:385px;top:125px">G…</div><div class="t" style="left:408px;top:125px">0…</div><div class="t" style="left:430px;top:125px">w…</div><div class="t" style="left:453px;top:125px">fa…</div><div class="a" style="left:0;top:140px;width:474px;height:1px;background:#909090"></div><div class="t" style="left:0px;top:141px">13</div><div class="t" style="left:21px;top:141px">gal</div><div class="t" style="left:44px;top:141px">j</div><div class="t" style="left:67px;top:141px">j</div><div class="t" style="left:90px;top:141px">j</div><div class="t" style="left:113px;top:141px">j</div><div class="t" style="left:136px;top:141px">U…</div><div class="t" style="left:159px;top:141px">j</div><div class="t" style="left:182px;top:141px">j</div><div class="t" style="left:205px;top:141px">d…</div><div class="t" style="left:385px;top:141px">G…</div><div class="t" style="left:408px;top:141px">0…</div><div class="t" style="left:430px;top:141px">w…</div><div class="t" style="left:453px;top:141px">fa…</div><div class="a" style="left:0;top:156px;width:474px;height:1px;background:#909090"></div><div class="t" style="left:0px;top:157px">14</div><div class="t" style="left:21px;top:157px">d…</div><div class="t" style="left:44px;top:157px">g</div><div class="t" style="left:67px;top:157px">123</div><div class="t" style="left:90px;top:157px">iug</div><div class="t" style="left:113px;top:157px">gu</div><div class="t" style="left:136px;top:157px">U…</div><div class="t" style="left:159px;top:157px">3…</div><div class="t" style="left:182px;top:157px">1…</div><div class="t" style="left:205px;top:157px">d…</div><div class="t" style="left:385px;top:157px">G…</div><div class="t" style="left:408px;top:157px">0…</div><div class="t" style="left:430px;top:157px">w…</div><div class="t" style="left:453px;top:157px">fa…</div><div class="a" style="left:0;top:172px;width:474px;height:1px;background:#909090"></div><div class="t" style="left:0px;top:173px">16</div><div class="t" style="left:21px;top:173px">d…</div><div class="t" style="left:44px;top:173px">g</div><div class="t" style="left:67px;top:173px">g</div><div class="t" style="left:90px;top:173px">g</div><div class="t" style="left:113px;top:173px">g</div><div class="t" style="left:136px;top:173px">U…</div><div class="t" style="left:159px;top:173px">g</div><div class="t" style="left:182px;top:173px">g</div><div class="t" style="left:205px;top:173px">d…</div><div class="t" style="left:385px;top:173px">G…</div><div class="t" style="left:408px;top:173px">0…</div><div class="t" style="left:430px;top:173px">w…</div><div class="t" style="left:453px;top:173px">fa…</div><div class="a" style="left:0;top:188px;width:474px;height:1px;background:#909090"></div><div class="a" style="left:20px;top:12px;width:1px;height:170px;background:#909090"></div><div class="a" style="left:43px;top:12px;width:1px;height:170px;background:#909090"></div><div class="a" style="left:66px;top:12px;width:1px;height:170px;background:#909090"></div><div class="a" style="left:89px;top:12px;width:1px;height:170px;background:#909090"></div><div class="a" style="left:112px;top:12px;width:1px;height:170px;background:#909090"></div><div class="a" style="left:135px;top:12px;width:1px;height:170px;background:#909090"></div><div class="a" style="left:158px;top:12px;width:1px;height:170px;background:#909090"></div><div class="a" style="left:181px;top:12px;width:1px;height:170px;background:#909090"></div><div class="a" style="left:204px;top:12px;width:1px;height:170px;background:#909090"></div><div class="a" style="left:227px;top:12px;width:1px;height:170px;background:#909090"></div><div class="a" style="left:249px;top:12px;width:1px;height:170px;background:#909090"></div><div class="a" style="left:272px;top:12px;width:1px;height:170px;background:#909090"></div><div class="a" style="left:294px;top:12px;width:1px;height:170px;background:#909090"></div><div class="a" style="left:317px;top:12px;width:1px;height:170px;background:#909090"></div><div class="a" style="left:339px;top:12px;width:1px;height:170px;background:#909090"></div><div class="a" style="left:362px;top:12px;width:1px;height:170px;background:#909090"></div><div class="a" style="left:384px;top:12px;width:1px;height:170px;background:#909090"></div><div class="a" style="left:407px;top:12px;width:1px;height:170px;background:#909090"></div><div class="a" style="left:429px;top:12px;width:1px;height:170px;background:#909090"></div><div class="a" style="left:452px;top:12px;width:1px;height:170px;background:#909090"></div><div class="a" style="left:474px;top:12px;width:1px;height:170px;background:#909090"></div></div><div class="a" style="left:737px;top:365px;width:17px;height:178px;background:#FAFAF6"></div><div class="a" style="left:735px;top:365px;width:19px;height:12px;background:#ECE9D8"></div><div class="a" style="left:738px;top:378px;width:15px;height:15px;border:1px solid #fff;border-radius:2px;background:linear-gradient(135deg,#C8D8FA,#B4C8F4)"></div><svg style="left:741px;top:381px" width="10" height="8"><path d="M1 6 L5 2 L9 6" stroke="#4D6185" stroke-width="2" fill="none"/></svg><div class="a" style="left:738px;top:394px;width:15px;height:61px;border:1px solid #fff;border-radius:2px;background:#C4D4FA"></div><div class="a" style="left:742px;top:420px;width:7px;height:1px;background:#8CA8E8"></div><div class="a" style="left:742px;top:422px;width:7px;height:1px;background:#8CA8E8"></div><div class="a" style="left:742px;top:424px;width:7px;height:1px;background:#8CA8E8"></div><div class="a" style="left:742px;top:426px;width:7px;height:1px;background:#8CA8E8"></div><div class="a" style="left:738px;top:527px;width:15px;height:15px;border:1px solid #fff;border-radius:2px;background:linear-gradient(135deg,#C8D8FA,#B4C8F4)"></div><svg style="left:741px;top:531px" width="10" height="8"><path d="M1 2 L5 6 L9 2" stroke="#4D6185" stroke-width="2" fill="none"/></svg><div class="a" style="left:771px;top:56px;width:2px;height:2px;background:#A8A898"></div><div class="a" style="left:775px;top:56px;width:2px;height:2px;background:#A8A898"></div><div class="a" style="left:779px;top:56px;width:2px;height:2px;background:#A8A898"></div><div class="a" style="left:782px;top:56px;width:2px;height:2px;background:#A8A898"></div><div class="a" style="left:786px;top:56px;width:2px;height:2px;background:#A8A898"></div><div class="a" style="left:790px;top:56px;width:2px;height:2px;background:#A8A898"></div><svg style="left:770px;top:64px" width="21" height="20" viewBox="0 0 21 20"><path d="M0.5 0.5 H8 L10.5 5 L13 0.5 H20.5 L14.5 10 L20.5 19.5 H13 L10.5 15 L8 19.5 H0.5 L6.5 10 Z" fill="url(#xbg)" stroke="#000" stroke-width="0.8"/></svg><svg style="left:770px;top:91px" width="20" height="20" viewBox="0 0 20 20"><rect x="0" y="0" width="20" height="20" fill="#1A3A78"/><rect x="3" y="4" width="14" height="6" fill="#E8ECF4"/><rect x="3" y="10" width="6" height="6" fill="#E8ECF4"/><rect x="12" y="12" width="5" height="4" fill="#E8ECF4"/></svg><svg style="left:770px;top:117px" width="21" height="21" viewBox="0 0 21 21"><path d="M0 1 H6 L7.5 5 L9 1 H14 L10 10.5 L14 20 H9 L7.5 16 L6 20 H0 L4.5 10.5 Z" fill="url(#xbg2)" stroke="#000" stroke-width="0.6"/><path d="M14 13 H16 L17 15 L18 13 H20 L18 16.5 L20 20 H18 L17 18 L16 20 H14 L16 16.5 Z" fill="#1A3A78"/></svg><svg style="left:770px;top:145px" width="21" height="20" viewBox="0 0 21 20"><path d="M5.5 1.5 H15.5 L19.5 10 L15.5 18.5 H5.5 L1.5 10 Z" fill="none" stroke="#1A3A78" stroke-width="3"/></svg><svg style="left:770px;top:172px" width="20" height="20" viewBox="0 0 20 20"><rect x="0" y="0" width="20" height="20" fill="#1A3A78"/><rect x="3" y="4" width="13" height="5" fill="#E8ECF4"/><rect x="3" y="9" width="5" height="7" fill="#E8ECF4"/><rect x="11" y="12" width="6" height="3" fill="#E8ECF4"/></svg><svg style="left:770px;top:199px" width="20" height="16" viewBox="0 0 20 16"><path d="M0 1 H8 V6 M11 1 H19 V6 M0 9 H13 V14 H20" fill="none" stroke="#1A3A78" stroke-width="2"/></svg><div class="a" style="left:0;top:550px;width:800px;height:1px;background:#808080"></div><div class="a" style="left:0;top:551px;width:800px;height:17px;background:#ECE9D8;border-left:2px solid #808080"></div><div class="a" style="left:0;top:568px;width:800px;height:2px;background:#FFFFFF"></div><div class="a" style="left:124px;top:366px;width:137px;height:196px;background:#fff;border:1px solid #ACA899;box-shadow:1px 1px 0 #8C8878"><div class="t" style="left:20px;top:3px;color:#000;letter-spacing:-0.3px">Properties</div><div class="t" style="left:20px;top:22px;color:#000;letter-spacing:-0.3px">Optimize</div><div class="t" style="left:20px;top:41px;color:#000;letter-spacing:-0.3px">New Table</div><div class="t" style="left:20px;top:60px;color:#000;letter-spacing:-0.3px">Load Data From File</div><div class="a" style="left:1px;top:77px;width:133px;height:19px;background:#316AC5"></div><div class="t" style="left:20px;top:79px;color:#fff;letter-spacing:-0.3px">Custom Query</div><div class="t" style="left:20px;top:98px;color:#000;letter-spacing:-0.3px">Reload Tables</div><div class="t" style="left:20px;top:117px;color:#000;letter-spacing:-0.3px">Copy</div><div class="t" style="left:20px;top:136px;color:#ACA899;letter-spacing:-0.3px">Paste</div><div class="t" style="left:20px;top:155px;color:#000;letter-spacing:-0.3px">Backup</div><div class="a" style="left:1px;top:172px;width:133px;height:1px;background:#ACA899"></div><div class="t" style="left:20px;top:177px">Drop</div></div></div></body></html>
